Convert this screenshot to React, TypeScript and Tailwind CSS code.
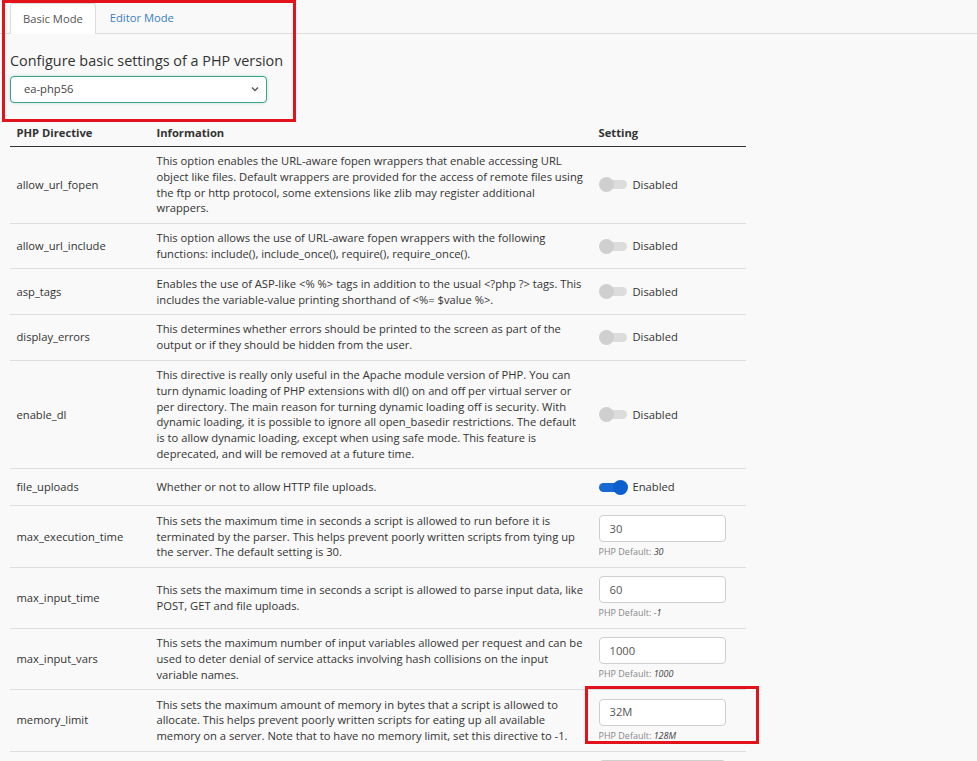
import React from "react";

type Row = {
  name: string;
  info: string;
  kind: "toggle" | "input";
  on?: boolean;
  value?: string;
  def?: string;
};

const ROWS: Row[] = [
  {
    name: "allow_url_fopen",
    info: "This option enables the URL-aware fopen wrappers that enable accessing URL object like files. Default wrappers are provided for the access of remote files using the ftp or http protocol, some extensions like zlib may register additional wrappers.",
    kind: "toggle",
    on: false,
  },
  {
    name: "allow_url_include",
    info: "This option allows the use of URL-aware fopen wrappers with the following functions: include(), include_once(), require(), require_once().",
    kind: "toggle",
    on: false,
  },
  {
    name: "asp_tags",
    info: "Enables the use of ASP-like <% %> tags in addition to the usual <?php ?> tags. This includes the variable-value printing shorthand of <%= $value %>.",
    kind: "toggle",
    on: false,
  },
  {
    name: "display_errors",
    info: "This determines whether errors should be printed to the screen as part of the output or if they should be hidden from the user.",
    kind: "toggle",
    on: false,
  },
  {
    name: "enable_dl",
    info: "This directive is really only useful in the Apache module version of PHP. You can turn dynamic loading of PHP extensions with dl() on and off per virtual server or per directory. The main reason for turning dynamic loading off is security. With dynamic loading, it is possible to ignore all open_basedir restrictions. The default is to allow dynamic loading, except when using safe mode. This feature is deprecated, and will be removed at a future time.",
    kind: "toggle",
    on: false,
  },
  {
    name: "file_uploads",
    info: "Whether or not to allow HTTP file uploads.",
    kind: "toggle",
    on: true,
  },
  {
    name: "max_execution_time",
    info: "This sets the maximum time in seconds a script is allowed to run before it is terminated by the parser. This helps prevent poorly written scripts from tying up the server. The default setting is 30.",
    kind: "input",
    value: "30",
    def: "30",
  },
  {
    name: "max_input_time",
    info: "This sets the maximum time in seconds a script is allowed to parse input data, like POST, GET and file uploads.",
    kind: "input",
    value: "60",
    def: "-1",
  },
  {
    name: "max_input_vars",
    info: "This sets the maximum number of input variables allowed per request and can be used to deter denial of service attacks involving hash collisions on the input variable names.",
    kind: "input",
    value: "1000",
    def: "1000",
  },
  {
    name: "memory_limit",
    info: "This sets the maximum amount of memory in bytes that a script is allowed to allocate. This helps prevent poorly written scripts for eating up all available memory on a server. Note that to have no memory limit, set this directive to -1.",
    kind: "input",
    value: "32M",
    def: "128M",
  },
  {
    name: "post_max_size",
    info: "Sets max size of post data allowed. This setting also affects file upload. To upload large files, this value must be larger than upload_max_filesize.",
    kind: "input",
    value: "8M",
    def: "8M",
  },
];

function Toggle({ on }: { on: boolean }) {
  return (
    <div className="flex h-[23px] items-center">
      <span className="relative inline-block h-[15px] w-[29px]">
        <span
          className={
            on
              ? "absolute left-0 top-[3px] h-[9px] w-[27px] rounded-full bg-[#1769d3]"
              : "absolute left-[1px] top-[3px] h-[9px] w-[27px] rounded-full bg-[#dcdcdc]"
          }
        />
        <span
          className={
            on
              ? "absolute right-0 top-0 h-[15px] w-[15px] rounded-full bg-[#0b5fcf]"
              : "absolute left-0 top-0 h-[15px] w-[15px] rounded-full bg-[#cfcfcf]"
          }
        />
      </span>
      <span className="ml-[5px]">{on ? "Enabled" : "Disabled"}</span>
    </div>
  );
}

function ValueInput({ value, def }: { value: string; def: string }) {
  return (
    <div className="flex flex-col pb-[1px] pt-[2px]">
      <div className="flex h-[27px] w-[127px] items-center rounded-[4px] border border-[#cfcfcf] bg-white px-[10px] text-[11.2px] text-[#555]">
        {value}
      </div>
      <div className="mt-[3px] text-[9px] leading-[14px] text-[#888]">
        PHP Default: <em className="text-[#444]">{def}</em>
      </div>
    </div>
  );
}

export default function App() {
  return (
    <div
      className="relative min-h-screen bg-[#f9f9f9] text-[11.2px] leading-[15.8px] text-[#333]"
      style={{ fontFamily: "'Open Sans', 'Liberation Sans', sans-serif" }}
    >
      <div className="flex border-b border-[#dcdcdc] pl-[10px] pt-[3px]">
        <div className="-mb-px rounded-t-[3px] border border-b-0 border-[#dcdcdc] bg-white px-[12px] py-[7px] text-[#555]">
          Basic Mode
        </div>
        <div className="px-[14px] py-[7px] text-[#3a7fc1]">Editor Mode</div>
      </div>

      <div className="px-[10px]">
        <h2 className="mt-[17px] text-[14.4px] leading-[20px] text-[#333]">
          Configure basic settings of a PHP version
        </h2>
        <div className="mt-[5px] flex h-[27px] w-[257px] items-center justify-between rounded-[4px] border border-[#3aa388] bg-white pl-[13px] pr-[7px] text-[#444] shadow-[0_0_3px_rgba(58,163,136,0.35)]">
          <span>ea-php56</span>
          <svg width="8" height="6" viewBox="0 0 8 6" fill="none">
            <path d="M1 1.5 L4 4.5 L7 1.5" stroke="#555" strokeWidth="1.3" />
          </svg>
        </div>

        <table className="mt-[19px] w-[736px] border-collapse">
          <thead>
            <tr className="border-b border-[#333] text-left font-bold">
              <th className="w-[140px] px-[6.5px] pb-[5px] pt-[3px] text-left">PHP Directive</th>
              <th className="w-[442px] px-[6.5px] pb-[5px] pt-[3px] text-left">Information</th>
              <th className="px-[6.5px] pb-[5px] pt-[3px] text-left">Setting</th>
            </tr>
          </thead>
          <tbody>
            {ROWS.map((r) => (
              <tr key={r.name} className="border-t border-[#dedede] align-middle">
                <td className="px-[6.5px] py-[6.5px]">{r.name}</td>
                <td className="px-[6.5px] py-[6.5px]">{r.info}</td>
                <td className="px-[6.5px] py-[6.5px]">
                  {r.kind === "toggle" ? (
                    <Toggle on={!!r.on} />
                  ) : (
                    <ValueInput value={r.value!} def={r.def!} />
                  )}
                </td>
              </tr>
            ))}
          </tbody>
        </table>
      </div>

      {/* annotation boxes */}
      <div className="pointer-events-none absolute left-[2px] top-0 h-[122px] w-[294px] border-[3px] border-[#e3131b]" />
      <div className="pointer-events-none absolute left-[585px] top-[686px] h-[58px] w-[174px] border-[3px] border-[#e3131b]" />
    </div>
  );
}
